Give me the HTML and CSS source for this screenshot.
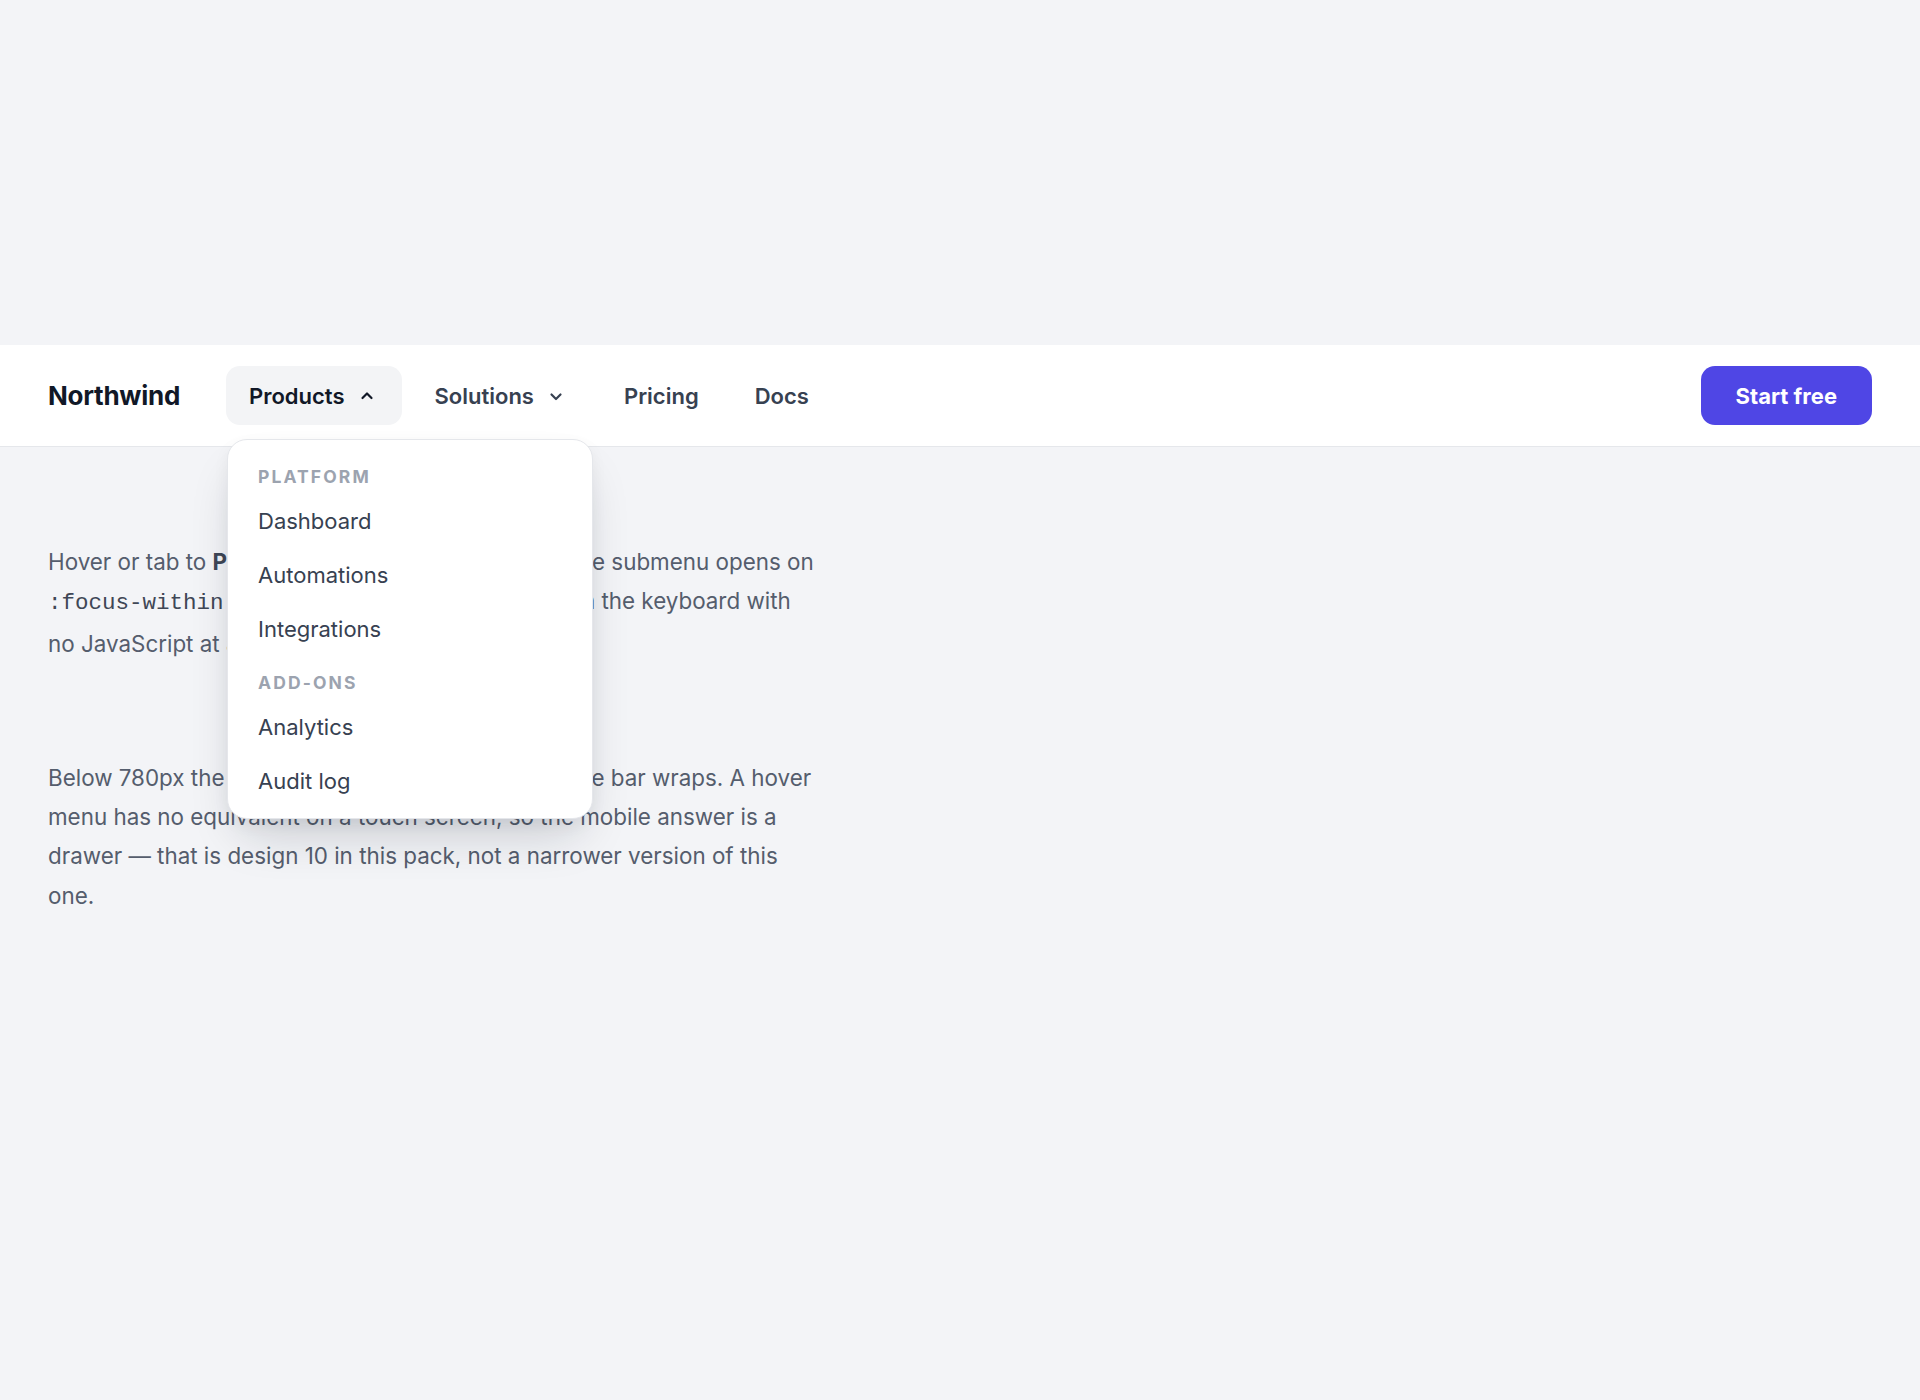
FILE: index.html
```html
<!DOCTYPE html>
<html lang="en">
<head>
  <meta charset="UTF-8">
  <meta name="viewport" content="width=device-width, initial-scale=1">
  <title>Northwind</title>
  <link rel="stylesheet" href="styles.css">
</head>
<body>
  <!-- Top bar: brand, menu with submenus, call to action -->
  <header class="topbar">
    <a class="brand" href="#">Northwind</a>

    <ul class="menu">
      <li class="menu-item has-sub is-open">
        <button class="menu-link is-active" type="button" aria-expanded="true">
          Products
          <svg class="caret" width="14" height="14" viewBox="0 0 14 14" aria-hidden="true">
            <path d="M2.5 9L7 4.5L11.5 9" />
          </svg>
        </button>
        <div class="submenu">
          <div class="submenu-label">Platform</div>
          <a class="submenu-link" href="#">Dashboard</a>
          <a class="submenu-link" href="#">Automations</a>
          <a class="submenu-link" href="#">Integrations</a>
          <div class="submenu-label">Add-ons</div>
          <a class="submenu-link" href="#">Analytics</a>
          <a class="submenu-link" href="#">Audit log</a>
        </div>
      </li>
      <li class="menu-item has-sub">
        <button class="menu-link" type="button" aria-expanded="false">
          Solutions
          <svg class="caret" width="14" height="14" viewBox="0 0 14 14" aria-hidden="true">
            <path d="M2.5 5.5L7 10L11.5 5.5" />
          </svg>
        </button>
      </li>
      <li class="menu-item"><a class="menu-link" href="#">Pricing</a></li>
      <li class="menu-item"><a class="menu-link" href="#">Docs</a></li>
    </ul>

    <a class="cta" href="#">Start free</a>
  </header>

  <!-- Notes under the bar -->
  <main class="notes">
    <p>Hover or tab to <strong>Products</strong>. Because it's pure CSS, the submenu opens on <code>:focus-within</code> as well as <code>:hover</code>, and it works on the keyboard with no JavaScript at all.</p>
    <p>Below 780px the links move to a second row and the bar wraps. A hover menu has no equivalent on a touch screen, so the mobile answer is a drawer — that is design 10 in this pack, not a narrower version of this one.</p>
  </main>
</body>
</html>
```

FILE: styles.css
```css
/* Basis */
* {
  box-sizing: border-box;
}
body {
  margin: 0;
  padding-top: 345px;
  min-height: 100vh;
  background-color: #f3f4f7;
  font-family: Inter, "Noto Sans", sans-serif;
  color: #555d6d;
}
a {
  text-decoration: none;
  color: inherit;
}

/* Top bar */
.topbar {
  display: flex;
  align-items: center;
  padding: 21px 48px;
  background-color: #ffffff;
  border-bottom: 1px solid #e5e7eb;
  position: relative;
  z-index: 10;
}
.brand {
  font-size: 26px;
  font-weight: 700;
  letter-spacing: -0.01em;
  color: #111827;
  margin-right: 46px;
}

/* Menu */
.menu {
  display: flex;
  gap: 10px;
  margin: 0;
  padding: 0;
  list-style: none;
}
.menu-item {
  position: relative;
}
.menu-link {
  display: flex;
  align-items: center;
  gap: 15px;
  height: 59px;
  padding: 0 23px;
  border: 0;
  border-radius: 14px;
  background: transparent;
  font-family: inherit;
  font-size: 22px;
  font-weight: 600;
  color: #374151;
  cursor: pointer;
}
.has-sub .menu-link {
  padding-right: 28px;
}
.menu-link:hover,
.menu-link.is-active {
  background-color: #f3f4f6;
  color: #111827;
}
.caret {
  flex: none;
}
.caret path {
  fill: none;
  stroke: currentColor;
  stroke-width: 2.2;
  stroke-linecap: round;
  stroke-linejoin: round;
}

/* Submenu: shown on hover and on keyboard focus */
.submenu {
  display: none;
  position: absolute;
  top: calc(100% + 14px);
  left: 1px;
  width: 366px;
  padding: 10px;
  background-color: #ffffff;
  border: 1px solid #e5e7eb;
  border-radius: 20px;
  box-shadow: 0 26px 50px -14px rgba(17, 24, 39, 0.2), 0 6px 16px rgba(17, 24, 39, 0.05);
}
.menu-item:hover .submenu,
.menu-item:focus-within .submenu,
.menu-item.is-open .submenu {
  display: block;
}
.submenu-label {
  padding: 15px 20px 5px;
  font-size: 17.5px;
  line-height: 24px;
  font-weight: 700;
  letter-spacing: 0.12em;
  text-transform: uppercase;
  color: #9ca3af;
}
.submenu-link {
  display: block;
  padding: 10px 20px;
  border-radius: 10px;
  font-size: 22px;
  line-height: 34px;
  color: #374151;
}
.submenu-link:hover {
  background-color: #f3f4f6;
}

/* Call to action */
.cta {
  margin-left: auto;
  padding: 0 35px;
  height: 59px;
  display: flex;
  align-items: center;
  border-radius: 14px;
  background-color: #4f46e5;
  color: #ffffff;
  font-size: 22px;
  font-weight: 700;
}
.cta:hover {
  background-color: #4338ca;
}

/* Notes */
.notes {
  padding: 95px 48px;
}
.notes p {
  max-width: 770px;
  margin: 0 0 95px;
  font-size: 22.4px;
  line-height: 39.3px;
}
.notes strong {
  color: #3f4756;
}
.notes code {
  font-family: "Liberation Mono", "DejaVu Sans Mono", monospace;
  font-size: 22.5px;
  color: #3f4756;
}
```
